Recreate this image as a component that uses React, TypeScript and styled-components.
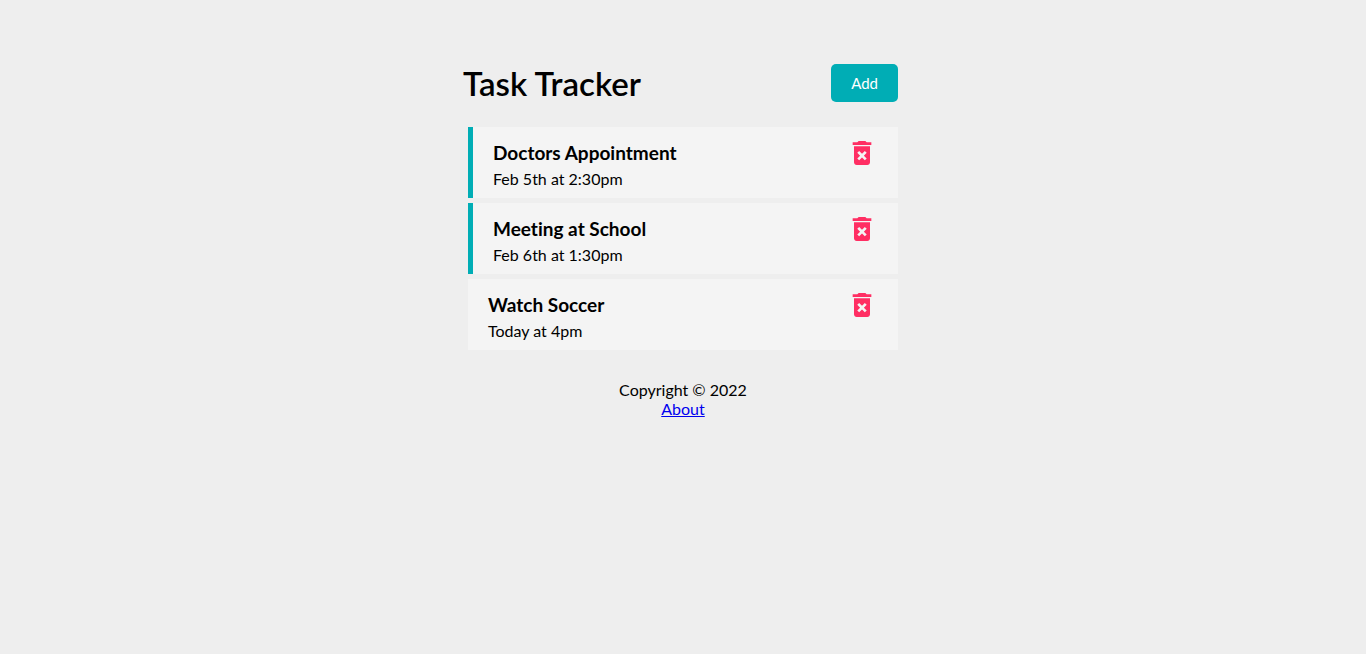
import React, { useState } from "react";
import styled, { createGlobalStyle } from "styled-components";
import { MdDeleteForever } from "react-icons/md";

interface Task {
  id: number;
  text: string;
  day: string;
  reminder: boolean;
}

const initialTasks: Task[] = [
  { id: 1, text: "Doctors Appointment", day: "Feb 5th at 2:30pm", reminder: true },
  { id: 2, text: "Meeting at School", day: "Feb 6th at 1:30pm", reminder: true },
  { id: 3, text: "Watch Soccer", day: "Today at 4pm", reminder: false },
];

const GlobalStyle = createGlobalStyle`
  * {
    box-sizing: border-box;
    margin: 0;
    padding: 0;
  }
  body {
    background: #eeeeee;
    color: #000000;
    font-family: Lato, sans-serif;
    font-size: 16px;
    font-variant-ligatures: none;
  }
`;

const Container = styled.main`
  max-width: 500px;
  margin: 29px auto;
  padding: 30px;
`;

const Header = styled.header`
  display: flex;
  justify-content: space-between;
  align-items: center;
  margin-bottom: 20px;
`;

const Title = styled.h1`
  font-size: 33px;
  font-weight: 600;
  line-height: 38px;
`;

const AddButton = styled.button`
  margin: 5px;
  padding: 10px 20px;
  border: none;
  border-radius: 5px;
  background: #00adb5;
  color: #ffffff;
  font-family: inherit;
  font-size: 15px;
  cursor: pointer;
`;

const TaskList = styled.ul`
  list-style: none;
`;

const TaskItem = styled.li<{ $reminder: boolean }>`
  margin: 5px;
  padding: 10px 20px;
  background: #f4f4f4;
  border-left: ${({ $reminder }) => ($reminder ? "5px solid #00adb5" : "none")};
`;

const TaskHeading = styled.div`
  display: flex;
  justify-content: space-between;
  align-items: center;
`;

const TaskName = styled.h3`
  font-size: 19px;
  font-weight: 700;
  line-height: 22px;
`;

const TaskDay = styled.p`
  font-size: 16px;
`;

const DeleteButton = styled.button`
  display: flex;
  border: none;
  background: none;
  color: #ff2e63;
  font-size: 32px;
  cursor: pointer;
`;

const Footer = styled.footer`
  margin-top: 30px;
  text-align: center;
`;

export default function App() {
  const [tasks, setTasks] = useState(initialTasks);

  const removeTask = (id: number) => setTasks(tasks.filter((task) => task.id !== id));

  return (
    <>
      <GlobalStyle />
      <Container>
        <Header>
          <Title>Task Tracker</Title>
          <AddButton type="button">Add</AddButton>
        </Header>
        <TaskList>
          {tasks.map((task) => (
            <TaskItem key={task.id} $reminder={task.reminder}>
              <TaskHeading>
                <TaskName>{task.text}</TaskName>
                <DeleteButton
                  type="button"
                  aria-label={`Delete ${task.text}`}
                  onClick={() => removeTask(task.id)}
                >
                  <MdDeleteForever />
                </DeleteButton>
              </TaskHeading>
              <TaskDay>{task.day}</TaskDay>
            </TaskItem>
          ))}
        </TaskList>
        <Footer>
          <p>Copyright © 2022</p>
          <a href="#about">About</a>
        </Footer>
      </Container>
    </>
  );
}
